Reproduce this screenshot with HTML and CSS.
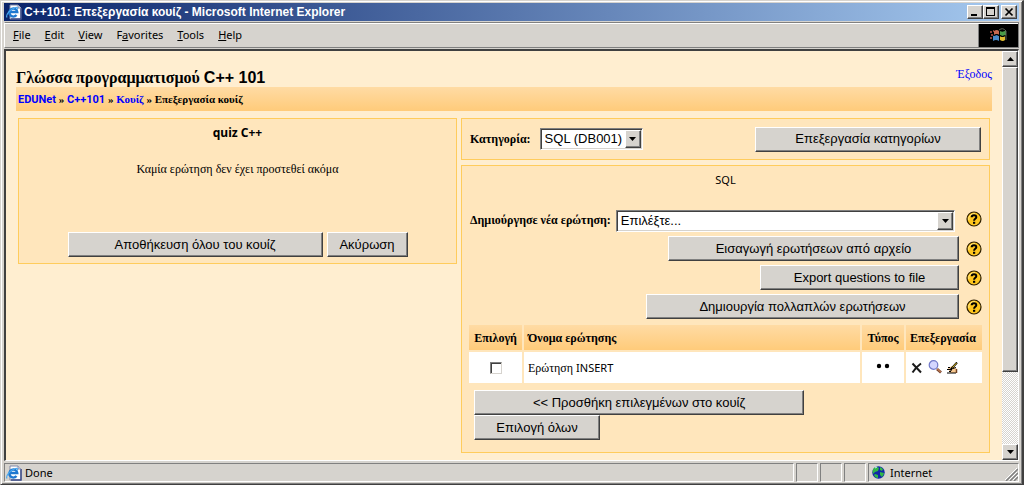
FILE: index.html
```html
<!DOCTYPE html>
<html lang="el">
<head>
<meta charset="utf-8">
<title>C++101: Επεξεργασία κουίζ</title>
<link rel="stylesheet" href="styles.css">
</head>
<body>
<svg width="0" height="0" class="defs" aria-hidden="true">
  <symbol id="ie" viewBox="0 0 16 16">
    <path d="M4 1h8l3 3v11H4z" fill="#fff" stroke="#8088a8"/>
    <path d="M15 4v11H5" fill="none" stroke="#3c4c88" stroke-width="1.5"/>
    <path d="M12 1v3h3" fill="#d8e0f4" stroke="#8088a8"/>
    <path d="M10.5 11a4 4 0 1 1 .8-3H4.5" fill="none" stroke="#1e78d0" stroke-width="2.3"/>
    <path d="M1 13.5C-.5 11 4 5 9.500 3.500c2-.5 2.500.5 1.500 2" fill="none" stroke="#48a8f0" stroke-width="1.200"/>
  </symbol>
  <symbol id="help" viewBox="0 0 16 16">
    <circle cx="8" cy="8" r="7" fill="#ffc61e" stroke="#2a1c00" stroke-width="1.200"/>
    <path d="M2.800 9A5.300 5.300 0 0 1 9 2.800" fill="none" stroke="#ffe98a"/>
    <path d="M5.700 6.300C5.700 3.400 10.400 3.500 10.300 6.100 10.200 7.800 8.100 7.700 8.100 9.700" fill="none" stroke="#000" stroke-width="2"/>
    <rect x="7" y="10.800" width="2.200" height="2" fill="#000"/>
  </symbol>
  <symbol id="down" viewBox="0 0 7 4"><path d="M0 0h7L3.500 4z"/></symbol>
  <symbol id="up" viewBox="0 0 7 4"><path d="M0 4h7L3.500 0z"/></symbol>
</svg>
<div class="window">
  <header class="titlebar">
    <svg class="icon"><use href="#ie"/></svg>
    <span class="caption">C++101: Επεξεργασία κουίζ - Microsoft Internet Explorer</span>
    <div class="controls">
      <button class="ctl" aria-label="Minimize"><svg viewBox="0 0 12 10"><path d="M2 7h6v2H2z"/></svg></button>
      <button class="ctl" aria-label="Maximize"><svg viewBox="0 0 12 10"><path d="M1 0h9v9H1zM2 2v6h7V2z" fill-rule="evenodd"/></svg></button>
      <button class="ctl close" aria-label="Close"><svg viewBox="0 0 12 10"><path d="M2.500 1.500l7 7M9.500 1.500l-7 7" stroke="#000" stroke-width="1.700"/></svg></button>
    </div>
  </header>
  <nav class="menubar">
    <button><u>F</u>ile</button><button><u>E</u>dit</button><button><u>V</u>iew</button><button>F<u>a</u>vorites</button><button><u>T</u>ools</button><button><u>H</u>elp</button>
    <div class="brand">
      <svg viewBox="0 0 18 16"><path d="M0 3h2v2H0zM1 6h2v2H1zM0 9h2v2H0zM3 2h1v2H3z" fill="#8a4038"/><path d="M4 3q3-2 5 0v4q-2-2-5 0z" fill="#c86850"/><path d="M10 3q3 2 6-1v5q-3 2-6 0z" fill="#4a9a48"/><path d="M3 8q3-2 6 0v5q-3-2-6 0z" fill="#4888c8"/><path d="M10 8q3 2 5 0v4q-2 2-5 0z" fill="#e0bc30"/><path d="M9.500 3v11M4 7.500q3-2 5.500 0t6 0" stroke="#000" fill="none"/><path d="M9 2q4-3 7 1v9" stroke="#5c6458" fill="none"/></svg>
    </div>
  </nav>
  <div class="viewport">
    <main class="page">
      <div class="heading">
        <h1>Γλώσσα προγραμματισμού <span>C++ 101</span></h1>
        <a class="logout" href="#">Έξοδος</a>
      </div>
      <nav class="crumbs"><a class="latin" href="#">EDUNet</a> » <a class="latin" href="#">C++101</a> » <a href="#">Κουίζ</a> » Επεξεργασία κουίζ</nav>
      <div class="columns">
        <section class="panel quiz">
          <h2>quiz C++</h2>
          <p>Καμία ερώτηση δεν έχει προστεθεί ακόμα</p>
          <div class="actions">
            <button class="btn w255">Αποθήκευση όλου του κουίζ</button>
            <button class="btn w81">Ακύρωση</button>
          </div>
        </section>
        <div class="right">
          <section class="panel category">
            <label for="cat">Κατηγορία:</label>
            <span class="select cat"><select id="cat"><option>SQL (DB001)</option></select><i><svg><use href="#down"/></svg></i></span>
            <button class="btn w226">Επεξεργασία κατηγορίων</button>
          </section>
          <section class="panel bank">
            <p class="bank-name">SQL</p>
            <div class="row create">
              <label for="new">Δημιούργησε νέα ερώτηση:</label>
              <span class="select new"><select id="new"><option>Επιλέξτε...</option></select><i><svg><use href="#down"/></svg></i></span>
              <a class="help" href="#" aria-label="Help"><svg><use href="#help"/></svg></a>
            </div>
            <div class="row"><button class="btn w291">Εισαγωγή ερωτήσεων από αρχείο</button><a class="help" href="#" aria-label="Help"><svg><use href="#help"/></svg></a></div>
            <div class="row"><button class="btn w199">Export questions to file</button><a class="help" href="#" aria-label="Help"><svg><use href="#help"/></svg></a></div>
            <div class="row"><button class="btn w313">Δημιουργία πολλαπλών ερωτήσεων</button><a class="help" href="#" aria-label="Help"><svg><use href="#help"/></svg></a></div>
            <table>
              <thead><tr><th class="c-pick">Επιλογή</th><th class="c-name">Όνομα ερώτησης</th><th class="c-type">Τύπος</th><th class="c-edit">Επεξεργασία</th></tr></thead>
              <tbody><tr>
                <td class="c-pick"><input type="checkbox" id="q1" aria-labelledby="q1-name"></td>
                <td class="c-name"><label for="q1" id="q1-name">Ερώτηση <span>INSERT</span></label></td>
                <td class="c-type"><svg width="14" height="6" viewBox="0 0 14 6"><circle cx="3" cy="3" r="2.200"/><circle cx="11" cy="3" r="2.200"/></svg></td>
                <td class="c-edit"><div class="tools">
                  <a class="delete" href="#" aria-label="Delete"><svg width="12" height="12" viewBox="0 0 12 12"><path d="M1.500 1.500l8.500 9M10 1.500Q5 5 1.500 10.500" fill="none" stroke="#1a1a1a" stroke-width="2"/></svg></a>
                  <a class="preview" href="#" aria-label="Preview"><svg width="14" height="14" viewBox="0 0 14 14"><path d="M9 9l4 3.500" stroke="#7a4630" stroke-width="2.800"/><path d="M9 8.500l3.500 3.500" stroke="#e89860"/><circle cx="5.500" cy="5" r="4.300" fill="#d4d6ff" stroke="#7078c8" stroke-width="1.200"/></svg></a>
                  <a class="edit" href="#" aria-label="Edit"><svg width="12" height="12" viewBox="0 0 12 12"><path d="M1 6l4-2 5 3v4H3z" fill="#f8c890"/><path d="M1 5.500h2M0 7.500h3M2 9.500h2M0 11h9" stroke="#000"/><path d="M10 .5L4.500 6.500l-1 2" fill="none" stroke="#000" stroke-width="2"/><path d="M9.500 1L5.500 5.500" stroke="#e8c020"/><path d="M6 6.500l3-1" stroke="#000"/><path d="M9.500 7v4" stroke="#704020" stroke-width="1.500"/></svg></a>
                </div></td>
              </tr></tbody>
            </table>
            <div class="bulk">
              <button class="btn w330">&lt;&lt; Προσθήκη επιλεγμένων στο κουίζ</button>
              <button class="btn w126">Επιλογή όλων</button>
            </div>
          </section>
        </div>
      </div>
    </main>
    <div class="scrollbar">
      <button class="arrow" aria-label="Scroll up"><svg><use href="#up"/></svg></button>
      <div class="track"><div class="thumb"></div></div>
      <button class="arrow" aria-label="Scroll down"><svg><use href="#down"/></svg></button>
    </div>
  </div>
  <footer class="status">
    <div class="cell message"><svg class="icon"><use href="#ie"/></svg>Done</div>
    <div class="cell"></div><div class="cell"></div><div class="cell"></div>
    <div class="cell zone">
      <svg width="13" height="13" viewBox="0 0 13 13"><circle cx="6.500" cy="6.500" r="6.200" fill="#1028a8"/><path d="M2 2q3-2 5 0l-1 3-3 1-2 2q-1-4 1-6zM8 1l3 2-1 2-2-1zM8 6l4 1q0 2-2 4l-2-2zM3 8l3 1v3q-3 0-4-3z" fill="#30b848"/><path d="M3 2l2-1" stroke="#c8f0ff"/></svg>
      <span>Internet</span>
      <svg class="grip" width="13" height="13" viewBox="0 0 13 13"><path d="M1 13L13 1M5 13l8-8M9 13l4-4" stroke="#808080" stroke-width="1.500"/><path d="M0 12L12 0M4 12l8-8M8 12l5-5" stroke="#fff"/></svg>
    </div>
  </footer>
</div>
</body>
</html>
```
FILE: styles.css
```css
* { box-sizing: border-box; }
body { margin: 0; background: #d6d3ce; color: #000; font: 12px/16px "Liberation Serif", serif; }
button, select, input { font: inherit; color: inherit; margin: 0; border-radius: 0; }
a { color: #0000ff; text-decoration: none; }
h1, h2, p { margin: 0; }
.defs { position: absolute; }
.icon { width: 16px; height: 16px; flex: none; }

.window {
  display: flex; flex-direction: column; min-height: 100vh;
  background: #d6d3ce; padding: 2px 3px 2px 2px;
  border: 1px solid #d6d3ce; border-right: 2px solid #404040; border-bottom-color: #404040;
  box-shadow: inset 1px 1px #fff, inset -1px -1px #808080;
}
.titlebar {
  display: flex; align-items: center; gap: 2px; height: 18px; margin-left: 1px; padding: 0 2px;
  background: linear-gradient(90deg, #0a246a, #a6caf0); color: #fff;
}
.caption { flex: 1; white-space: nowrap; font: bold 12px/18px "Liberation Sans", sans-serif; }
.controls { display: flex; }
.ctl {
  display: flex; width: 16px; height: 14px; padding: 1px; background: #d6d3ce; border: 1px solid;
  border-color: #fff #404040 #404040 #fff; box-shadow: inset -1px -1px #808080;
}
.ctl svg { width: 12px; height: 10px; }
.close { margin-left: 2px; }

.menubar {
  display: flex; align-items: stretch; height: 26px; margin-top: 1px; margin-left: 1px; padding-left: 1px;
  border: 1px solid #808080; border-left-color: #fff; box-shadow: inset 0 1px #fff;
  font: 11px/22px "Noto Sans", sans-serif;
}
.menubar button { border: 0; background: none; padding: 0 7px; }
.brand {
  margin-left: auto; width: 40px; display: grid; place-items: center; background: #000;
  border-left: 1px solid #808080; margin-top: 1px;
}
.brand svg { width: 18px; height: 16px; }

.viewport {
  flex: 1; display: flex; margin: 1px 0 0 1px; border: 1px solid #808080; border-top: 2px solid #404040;
  border-left: 2px solid #404040; border-right-color: #fff; border-bottom-color: #fff; background: #ffeed0;
}
.page { flex: 1; min-width: 0; padding: 16px 10px 4px; }
.heading { display: flex; justify-content: space-between; align-items: flex-start; height: 20px; }
h1 { font: bold 16px/22px "Liberation Serif", serif; }
h1 span { font-family: "Liberation Sans", sans-serif; }
.logout { font-size: 12px; line-height: 14px; }
.crumbs {
  height: 24px; padding: 0 2px; line-height: 24px; font-weight: bold; font-size: 11px;
  background: linear-gradient(#ffdba4, #ffcb7a);
}
.latin { font-family: Roboto, sans-serif; }
.columns { display: grid; grid-template-columns: 439fr 529fr; gap: 4px; align-items: start; margin: 7px 2px 0; }
.panel { background: #ffe6bc; border: 1px solid #ffcc5c; }

.btn {
  height: 25px; padding: 0 4px; font: 13px/20px "Liberation Sans", sans-serif; white-space: nowrap;
  background: #d6d3ce; border: 1px solid; border-color: #fff #404040 #404040 #fff;
  box-shadow: inset -1px -1px #808080;
}
.w81 { width: 81px; }
.w126 { width: 126px; }
.w199 { width: 199px; }
.w226 { width: 226px; }
.w255 { width: 255px; }
.w291 { width: 291px; }
.w313 { width: 313px; }
.w330 { width: 330px; }

.quiz { text-align: center; padding: 6px; }
.quiz h2 { font: bold 12px/16px "Noto Sans", sans-serif; }
.quiz p { margin: 20px 0 55px; }
.actions { display: flex; justify-content: center; gap: 4px; }

.right { display: grid; gap: 5px; }
.category { display: flex; align-items: center; padding: 8px; height: 42px; }
.category .btn { margin-left: auto; }
.bank label, .category label { font-weight: bold; white-space: nowrap; }
.select {
  position: relative; display: block; height: 22px; background: #fff; border: 1px solid;
  border-color: #808080 #fff #fff #808080; box-shadow: inset 1px 1px #404040, inset -1px -1px #d6d3ce;
}
.select select {
  appearance: none; width: 100%; height: 20px; border: 0; background: none; padding: 0 17px 0 4px;
  font: 13px/20px "Liberation Sans", sans-serif;
}
.select i {
  position: absolute; right: 1px; top: 1px; bottom: 1px; width: 16px; display: grid; place-items: center;
  pointer-events: none; background: #d6d3ce; border: 1px solid;
  border-color: #fff #404040 #404040 #fff; box-shadow: inset -1px -1px #808080;
}
.select svg, .arrow svg { width: 7px; height: 4px; }
.cat { width: 103px; margin-left: 9px; }
.new { flex: 1; margin: 2px 6px 0 0; }

.bank { padding: 6px 5px 12px; }
.bank-name { text-align: center; font: 11px/16px "Noto Sans", sans-serif; }
.row { display: flex; justify-content: flex-end; align-items: center; padding: 0 2px 0 3px; height: 29px; gap: 7px; }
.create { margin-top: 17px; gap: 5px; }
.help { display: block; height: 16px; }
.help svg { width: 16px; height: 16px; }
.create .help { margin-bottom: 2px; }

table { width: 100%; border-spacing: 2px; margin-top: 2px; }
th, td { padding: 0 4px; text-align: left; }
th { height: 25px; background: linear-gradient(#ffdba4, #ffcb7a); }
td { height: 31px; background: #fff; }
.bank td label { font-weight: normal; }
td label span { font: 11px/16px "Noto Sans", sans-serif; }
.c-pick { width: 53px; text-align: center; }
.c-type { width: 42px; text-align: center; }
.c-type svg { display: block; margin: 0 auto 4px; }
.c-edit { width: 76px; }
input[type=checkbox] {
  display: block; appearance: none; width: 12px; height: 12px; margin: 0 auto; background: #fff; border: 1px solid;
  border-color: #808080 #d6d3ce #d6d3ce #808080; box-shadow: inset 1px 1px #404040;
}
.tools { display: flex; align-items: center; gap: 5px; height: 16px; padding-left: 1px; }
.tools a { display: block; height: 16px; }
.tools .delete, .tools .edit { padding-top: 2px; }
.tools svg { display: block; }
.bulk { display: flex; flex-direction: column; align-items: flex-start; padding: 5px 7px 0; }

.scrollbar { flex: none; width: 16px; display: flex; flex-direction: column; }
.arrow, .thumb {
  background: #d6d3ce; border: 1px solid; border-color: #fff #404040 #404040 #fff;
  box-shadow: inset -1px -1px #808080;
}
.arrow { height: 16px; padding: 0; display: grid; place-items: center; }
.track { flex: 1; background: repeating-conic-gradient(#fff 0 25%, #d6d3ce 0 50%) 0 0 / 2px 2px; }
.thumb { height: 81%; }

.status { display: flex; gap: 2px; height: 19px; margin: 2px 0 0 1px; font: 11px/16px "Noto Sans", sans-serif; }
.cell { width: 22px; display: flex; align-items: center; border: 1px solid; border-color: #808080 #fff #fff #808080; }
.message { flex: 1; gap: 3px; padding-left: 1px; }
.zone { width: 151px; gap: 5px; padding-left: 3px; }
.grip { margin-left: auto; align-self: flex-end; }
```
